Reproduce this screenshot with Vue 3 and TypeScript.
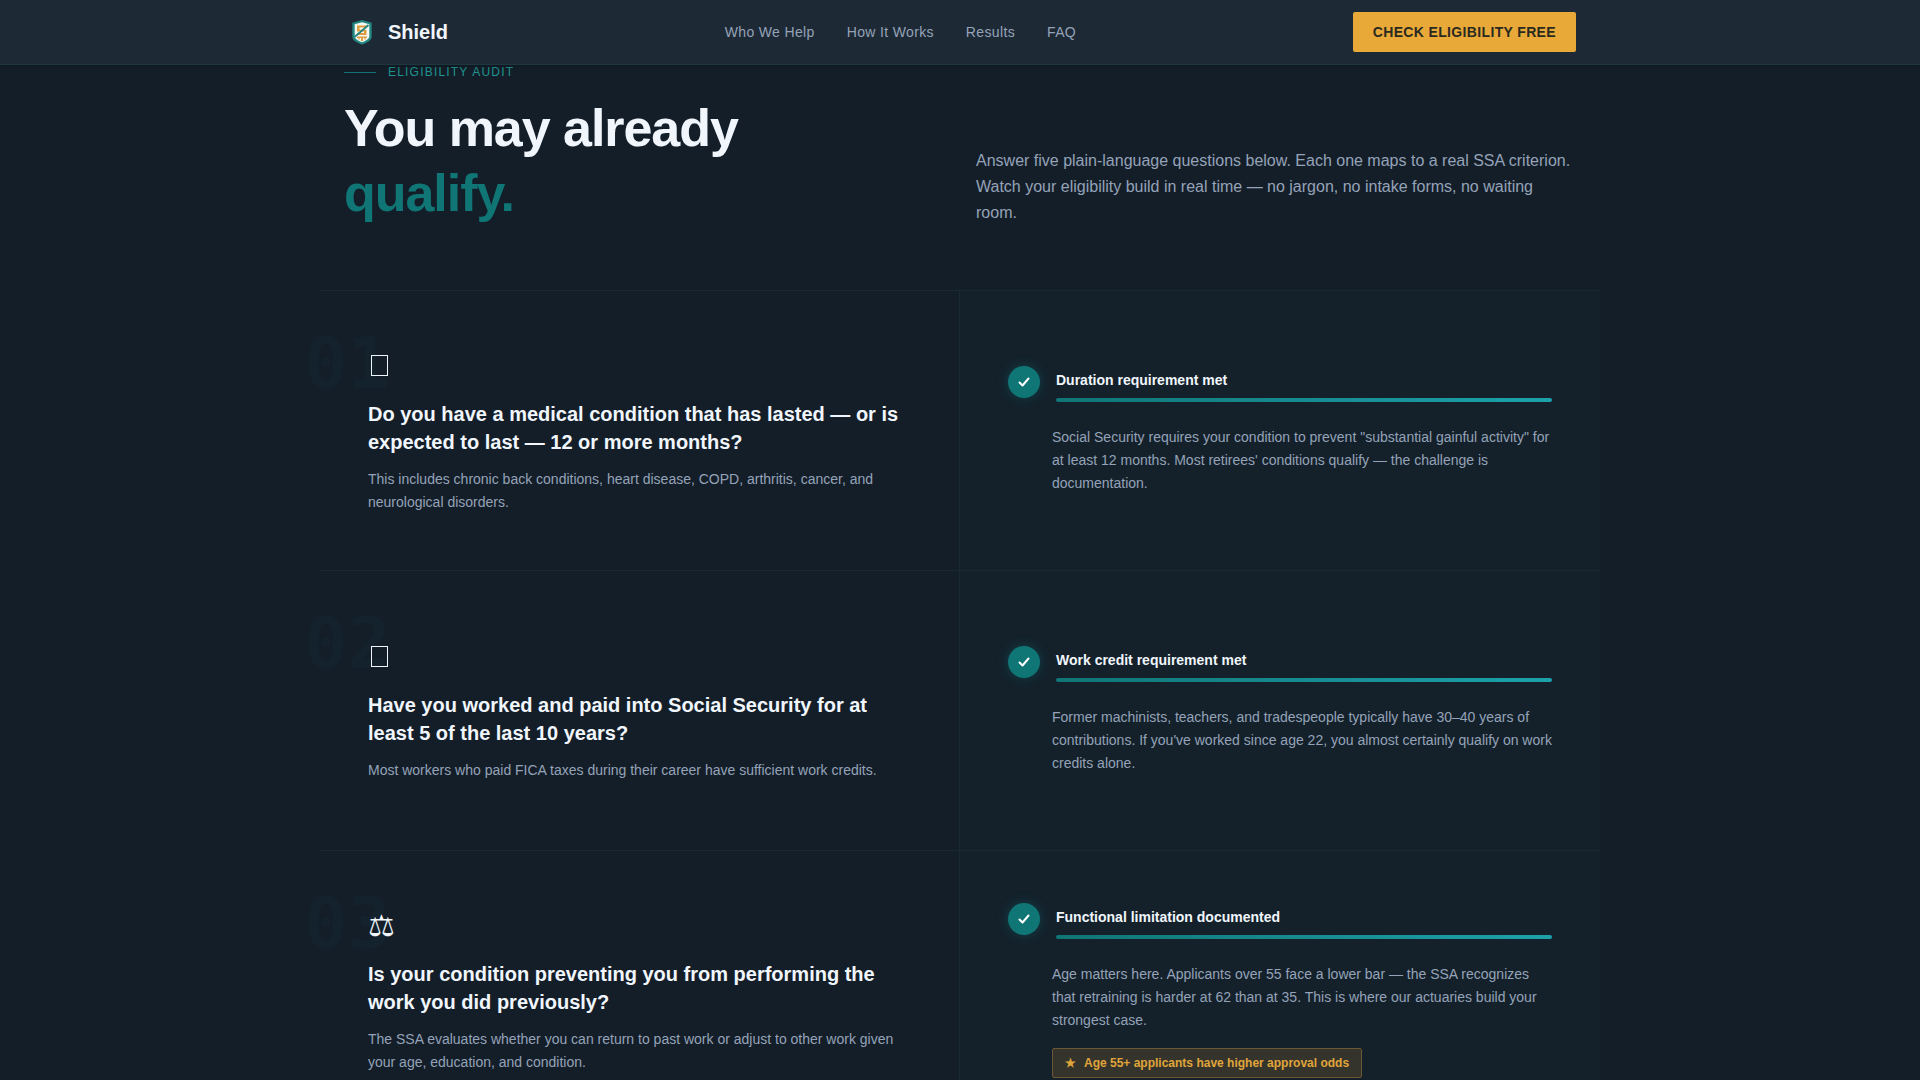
<script setup lang="ts">
interface Criterion {
  number: string
  icon: 'box' | 'scales'
  question: string
  hint: string
  verdict: string
  explanation: string
  badge?: string
}

const links: string[] = ['Who We Help', 'How It Works', 'Results', 'FAQ']

const criteria: Criterion[] = [
  {
    number: '01',
    icon: 'box',
    question: 'Do you have a medical condition that has lasted — or is expected to last — 12 or more months?',
    hint: 'This includes chronic back conditions, heart disease, COPD, arthritis, cancer, and neurological disorders.',
    verdict: 'Duration requirement met',
    explanation:
      'Social Security requires your condition to prevent "substantial gainful activity" for at least 12 months. Most retirees\' conditions qualify — the challenge is documentation.',
  },
  {
    number: '02',
    icon: 'box',
    question: 'Have you worked and paid into Social Security for at least 5 of the last 10 years?',
    hint: 'Most workers who paid FICA taxes during their career have sufficient work credits.',
    verdict: 'Work credit requirement met',
    explanation:
      "Former machinists, teachers, and tradespeople typically have 30–40 years of contributions. If you've worked since age 22, you almost certainly qualify on work credits alone.",
  },
  {
    number: '03',
    icon: 'scales',
    question: 'Is your condition preventing you from performing the work you did previously?',
    hint: 'The SSA evaluates whether you can return to past work or adjust to other work given your age, education, and condition.',
    verdict: 'Functional limitation documented',
    explanation:
      'Age matters here. Applicants over 55 face a lower bar — the SSA recognizes that retraining is harder at 62 than at 35. This is where our actuaries build your strongest case.',
    badge: 'Age 55+ applicants have higher approval odds',
  },
]
</script>

<template>
  <div class="page">
    <header class="topbar">
      <div class="topbar-inner">
        <a class="brand" href="#">
          <svg class="brand-mark" viewBox="0 0 36 36" aria-hidden="true">
            <path d="M18 6L27.700 8.800V22.500C27.700 26.500 22.500 29 18 30.500C13.500 29 8.300 26.500 8.300 22.500V8.800Z" fill="#23857f" />
            <path d="M18 8.200L25.300 10.200V22.300C25.300 25 21.500 27 18 28.300C14.500 27 10.700 25 10.700 22.300V10.200Z" fill="#f4f8f5" />
            <path d="M13 11.500H23.500V13.500H15.500V15.700H22.500V21H13V19H20V17.500H13Z" fill="#dd9c3e" />
            <path d="M13 22.500H23V24H19V27H17V24H13Z" fill="#dd9c3e" />
            <path d="M15 23.500V25.500M21 23.500V25.500" stroke="#dd9c3e" stroke-width="1.300" />
            <path d="M10.500 23L24.500 11" stroke="#23857f" stroke-width="1.800" />
          </svg>
          <span>Shield</span>
        </a>
        <nav class="links" aria-label="Main">
          <a v-for="link in links" :key="link" href="#">{{ link }}</a>
        </nav>
        <button class="cta" type="button">CHECK ELIGIBILITY FREE</button>
      </div>
    </header>

    <main class="audit">
      <section class="intro">
        <div>
          <p class="eyebrow">ELIGIBILITY AUDIT</p>
          <h1>You may already <em>qualify.</em></h1>
        </div>
        <p class="lead">
          Answer five plain-language questions below. Each one maps to a real SSA criterion. Watch your
          eligibility build in real time — no jargon, no intake forms, no waiting room.
        </p>
      </section>

      <section class="criteria">
        <article v-for="item in criteria" :key="item.number" class="row">
          <div class="ask">
            <span class="ghost" aria-hidden="true">{{ item.number }}</span>
            <div class="icon" aria-hidden="true">
              <span v-if="item.icon === 'scales'" class="scales">⚖</span>
              <svg v-else width="24" height="32" viewBox="0 0 24 32">
                <rect x="3.500" y="5.500" width="16" height="20" fill="none" stroke="currentColor" />
              </svg>
            </div>
            <h2>{{ item.question }}</h2>
            <p>{{ item.hint }}</p>
          </div>
          <div class="answer">
            <div class="status">
              <span class="check">
                <svg width="14" height="14" viewBox="0 0 14 14" fill="none" aria-hidden="true">
                  <path d="M2.500 7.500L5.500 10.500L11.500 3.500" stroke="#fff" stroke-width="2" stroke-linecap="round" stroke-linejoin="round" />
                </svg>
              </span>
              <div class="meter">
                <h3>{{ item.verdict }}</h3>
                <div class="bar"></div>
              </div>
            </div>
            <div class="detail">
              <p>{{ item.explanation }}</p>
              <span v-if="item.badge" class="badge"><span class="star">★</span>{{ item.badge }}</span>
            </div>
          </div>
        </article>
      </section>
    </main>
  </div>
</template>

<style>
body {
  margin: 0;
  background: #141e29;
}
</style>

<style scoped>
.page {
  font-family: "Liberation Sans", Arial, sans-serif;
  font-size: 14px;
  line-height: 23px;
  color: #94a3b8;
}

h1,
h2,
h3,
p {
  margin: 0;
}

a {
  color: inherit;
  text-decoration: none;
}

.topbar {
  position: sticky;
  top: 0;
  z-index: 10;
  background: #1e2936;
  border-bottom: 1px solid #1d3640;
  box-shadow: 0 1px 4px rgba(4, 18, 26, 0.5);
}

.topbar-inner {
  display: flex;
  align-items: center;
  justify-content: space-between;
  box-sizing: border-box;
  max-width: 1280px;
  min-height: 64px;
  margin: 0 auto;
  padding: 0 24px;
}

.brand {
  display: flex;
  align-items: center;
  gap: 8px;
  font-size: 20px;
  font-weight: 700;
  color: #f0f6fc;
}

.brand-mark {
  width: 36px;
  height: 36px;
}

.links {
  display: flex;
  gap: 32px;
  letter-spacing: 0.025em;
}

.cta {
  height: 40px;
  padding: 0 20px;
  border: 0;
  border-radius: 2px;
  background: #e8a938;
  color: #2b2a20;
  font: inherit;
  font-weight: 700;
  letter-spacing: 0.025em;
}

.audit {
  max-width: 1280px;
  margin: 0 auto;
}

.intro {
  display: grid;
  grid-template-columns: 1fr 1fr;
  gap: 32px;
  align-items: end;
  padding: 0 24px 64px;
}

.eyebrow {
  display: flex;
  align-items: center;
  gap: 12px;
  margin-bottom: 17px;
  font-size: 12px;
  line-height: 14px;
  letter-spacing: 0.1em;
  color: #1f9490;
}

.eyebrow::before {
  content: "";
  width: 32px;
  height: 1px;
  background: #157277;
}

h1 {
  font-size: 52px;
  line-height: 65px;
  letter-spacing: -0.02em;
  color: #f0f6fc;
}

h1 em {
  display: block;
  font-style: normal;
  color: #107575;
}

.lead {
  font-size: 16px;
  line-height: 26px;
}

.criteria {
  border-top: 1px solid #192934;
}

.row {
  display: grid;
  grid-template-columns: 1fr 1fr;
  box-sizing: border-box;
  min-height: 280px;
  border-bottom: 1px solid #192934;
}

.ask,
.answer {
  display: flex;
  flex-direction: column;
  justify-content: center;
  padding: 24px 48px;
}

.ask {
  position: relative;
  border-right: 1px solid #192934;
}

.answer {
  background: #14212b;
}

.ghost {
  position: absolute;
  top: 32px;
  left: -16px;
  font-family: "DejaVu Sans Mono", monospace;
  font-size: 72px;
  font-weight: 700;
  line-height: 80px;
  color: rgba(13, 115, 119, 0.05);
}

.icon {
  position: relative;
  display: flex;
  align-items: center;
  height: 36px;
  margin-bottom: 16px;
  color: #f0f6fc;
}

.scales {
  font-family: "DejaVu Sans", sans-serif;
  font-size: 30px;
  line-height: 36px;
}

h2 {
  margin-bottom: 12px;
  font-size: 20px;
  line-height: 28px;
  color: #f0f6fc;
}

.status {
  display: flex;
  gap: 16px;
  margin-bottom: 24px;
}

.check {
  display: flex;
  flex: none;
  align-items: center;
  justify-content: center;
  width: 32px;
  height: 32px;
  border-radius: 50%;
  background: #107575;
  box-shadow: 0 0 12px rgba(13, 115, 119, 0.4);
}

.meter {
  flex: 1;
}

h3 {
  margin-bottom: 4px;
  font-size: 14px;
  line-height: 28px;
  color: #f0f6fc;
}

.bar {
  height: 4px;
  border-radius: 2px;
  background: linear-gradient(90deg, #107575, #1ca2ac);
}

.detail {
  padding-left: 44px;
}

.badge {
  display: inline-flex;
  align-items: center;
  gap: 8px;
  box-sizing: border-box;
  height: 30px;
  margin-top: 16px;
  padding: 0 12px;
  border: 1px solid #6b5732;
  border-radius: 2px;
  background: #34342d;
  color: #e0a53a;
  font-size: 12px;
  font-weight: 700;
}

.star {
  width: 11px;
}
</style>
